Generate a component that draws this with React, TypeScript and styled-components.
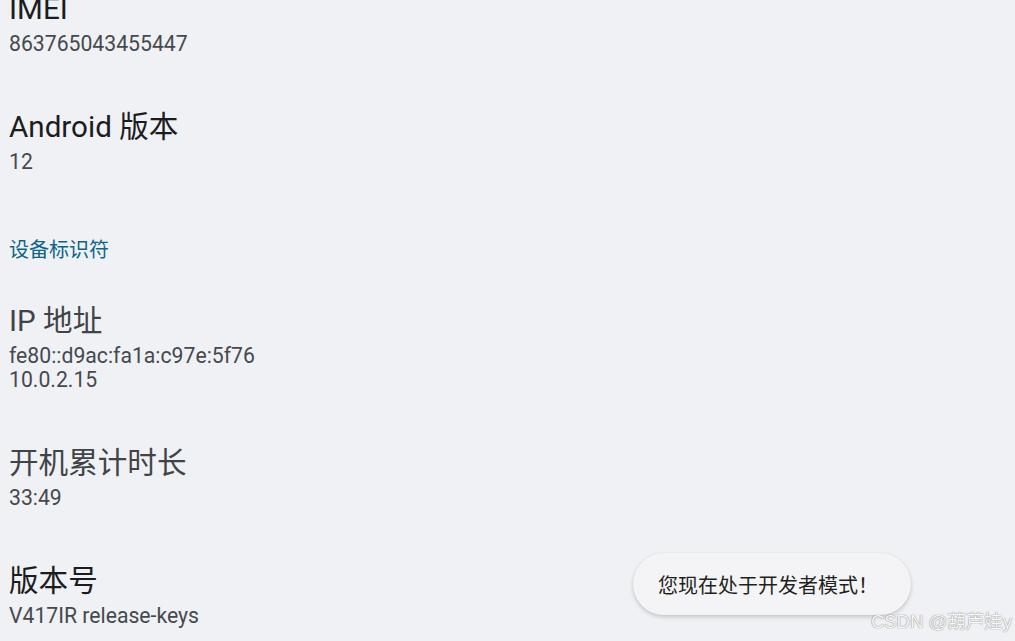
import React from 'react'
import styled, { createGlobalStyle } from 'styled-components'

interface Pref {
  title: string
  summary: string[]
  muted?: boolean
}

interface Group {
  category?: string
  items: Pref[]
}

const GlobalStyle = createGlobalStyle`
  html, body {
    margin: 0;
    padding: 0;
    background: #f0f1f4;
    overflow: hidden;
  }
  body {
    font-family: Roboto, "Noto Sans CJK SC", sans-serif;
  }
`

const Screen = styled.div`
  position: relative;
  width: 1015px;
  height: 641px;
  overflow: hidden;
  background: #f0f1f4;
`

const PrefList = styled.div`
  display: flex;
  flex-direction: column;
  margin-top: -35px;
`

const Category = styled.div`
  padding: 37px 9px 15px;
  font-size: 20px;
  line-height: 24px;
  color: #0b6689;
`

const Item = styled.div`
  display: flex;
  flex-direction: column;
  gap: 6px;
  padding: 27px 9px 27px;
`

const Title = styled.div<{ $muted?: boolean }>`
  font-size: 29.6px;
  line-height: 34px;
  color: ${p => (p.$muted ? '#404448' : '#1b1c1e')};
`

const Summary = styled.div`
  font-size: 21.2px;
  line-height: 24px;
  color: #45494e;
`

const Toast = styled.div`
  position: absolute;
  left: 633px;
  top: 553px;
  width: 278px;
  height: 62px;
  box-sizing: border-box;
  padding: 0 25px;
  display: flex;
  align-items: center;
  border-radius: 31px;
  background: #f4f4f6;
  box-shadow: 0 2px 4px rgba(0, 0, 0, 0.18), 0 0 1px rgba(0, 0, 0, 0.08);
  font-family: "Noto Sans CJK SC", sans-serif;
  font-size: 20px;
  color: #1e1f21;
`

const Watermark = styled.div`
  position: absolute;
  right: 3px;
  top: 610px;
  font-family: "Liberation Sans", "Noto Sans CJK SC", sans-serif;
  font-size: 18.5px;
  line-height: 24px;
  color: rgba(255, 255, 255, 0.95);
  text-shadow: 0 0 1px rgba(100, 100, 100, 0.8), 0 0 1px rgba(100, 100, 100, 0.5);
`

const groups: Group[] = [
  {
    items: [
      { title: 'IMEI', summary: ['863765043455447'] },
      { title: 'Android 版本', summary: ['12'] },
    ],
  },
  {
    category: '设备标识符',
    items: [
      { title: 'IP 地址', summary: ['fe80::d9ac:fa1a:c97e:5f76', '10.0.2.15'], muted: true },
      { title: '开机累计时长', summary: ['33:49'], muted: true },
      { title: '版本号', summary: ['V417IR release-keys'] },
    ],
  },
]

export default function App() {
  return (
    <Screen>
      <GlobalStyle />
      <PrefList>
        {groups.map((g, gi) => (
          <React.Fragment key={gi}>
            {g.category && <Category>{g.category}</Category>}
            {g.items.map(item => (
              <Item key={item.title}>
                <Title $muted={item.muted}>{item.title}</Title>
                <div>
                  {item.summary.map(line => (
                    <Summary key={line}>{line}</Summary>
                  ))}
                </div>
              </Item>
            ))}
          </React.Fragment>
        ))}
      </PrefList>
      <Toast>您现在处于开发者模式！</Toast>
      <Watermark>CSDN @葫芦娃y</Watermark>
    </Screen>
  )
}
